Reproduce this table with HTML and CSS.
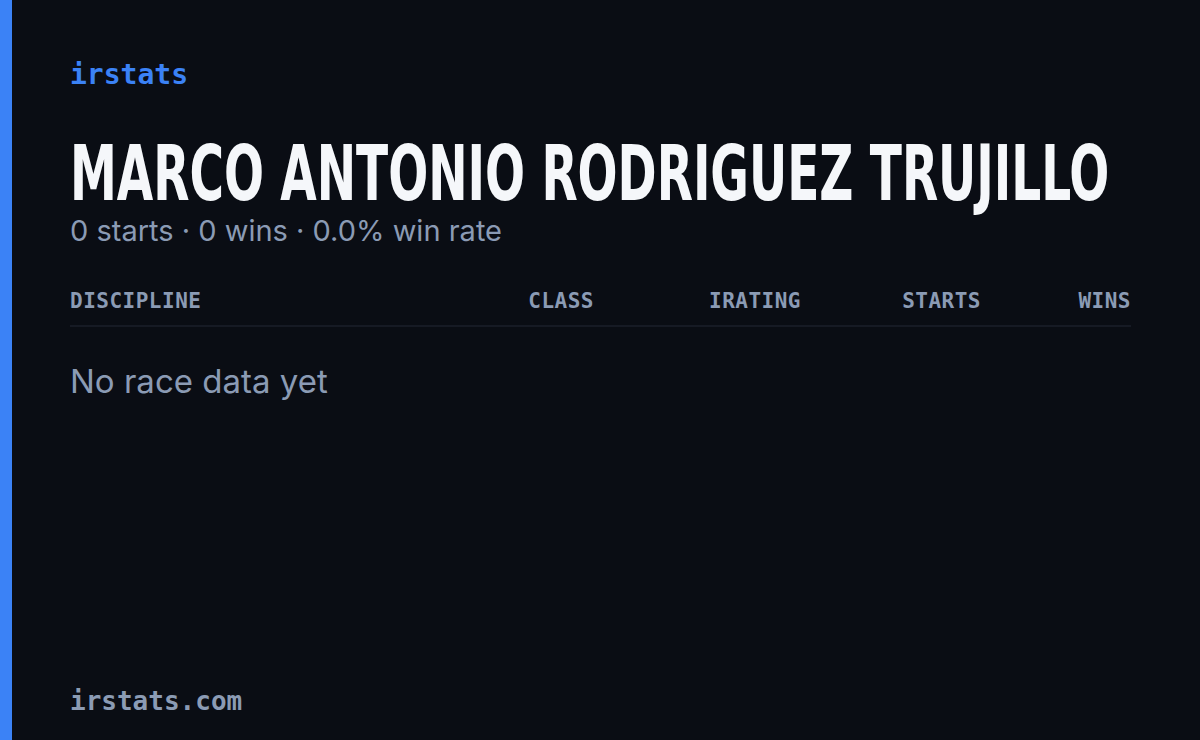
FILE: index.html
```html
<!DOCTYPE html>
<html lang="en">
<head>
    <meta charset="UTF-8">
    <meta name="viewport" content="width=device-width, initial-scale=1.0">
    <title>irstats - Marco Antonio Rodriguez Trujillo</title>
    <link rel="stylesheet" href="styles.css">
</head>
<body>
    <div class="card">
        <div class="accent"></div>
        <main class="content">
            <div class="brand">irstats</div>

            <h1 class="driver-name"><span>MARCO ANTONIO RODRIGUEZ TRUJILLO</span></h1>
            <div class="summary">0 starts · 0 wins · 0.0% win rate</div>

            <div class="stats-table">
                <div class="stats-head">
                    <div>DISCIPLINE</div>
                    <div class="num">CLASS</div>
                    <div class="num">IRATING</div>
                    <div class="num">STARTS</div>
                    <div class="num">WINS</div>
                </div>
                <div class="empty">No race data yet</div>
            </div>

            <div class="footer">irstats.com</div>
        </main>
    </div>
</body>
</html>
```

FILE: styles.css
```css
html, body {
    margin: 0;
    padding: 0;
    background-color: #0a0d14;
}
.card {
    display: flex;
    width: 1200px;
    height: 740px;
    background-color: #0a0d14;
    overflow: hidden;
}
.accent {
    width: 12px;
    flex-shrink: 0;
    background-color: #3b82f6;
}
.content {
    flex: 1;
    min-width: 0;
    display: flex;
    flex-direction: column;
    padding: 55px 69px 24px 58px;
}
.brand {
    font-family: "DejaVu Sans Mono", monospace;
    font-size: 28px;
    font-weight: bold;
    color: #3b82f6;
    line-height: 40px;
}
.driver-name {
    margin: 39px 0 0 0;
    font-family: "DejaVu Sans", sans-serif;
    font-stretch: condensed;
    font-weight: bold;
    font-size: 76px;
    line-height: 80px;
    color: #f5f7fa;
    white-space: nowrap;
}
.driver-name span {
    display: inline-block;
    transform: scaleX(0.688);
    transform-origin: left center;
}
.summary {
    font-family: Inter, sans-serif;
    font-size: 29px;
    line-height: 36px;
    color: #8b9bb4;
    margin-top: -1px;
}
.stats-table {
    margin-top: 40px;
}
.stats-head {
    display: grid;
    grid-template-columns: 1fr 130px 207px 180px 150px;
    font-family: "DejaVu Sans Mono", monospace;
    font-size: 21px;
    font-weight: bold;
    letter-spacing: 0.5px;
    color: #8b9bb4;
    padding-bottom: 12px;
    border-bottom: 2px solid #161a24;
}
.stats-head .num {
    text-align: right;
}
.empty {
    margin-top: 34px;
    font-family: Inter, sans-serif;
    font-size: 33px;
    color: #8b9bb4;
}
.footer {
    margin-top: auto;
    font-family: "DejaVu Sans Mono", monospace;
    font-size: 26px;
    font-weight: bold;
    color: #8b9bb4;
}
```
